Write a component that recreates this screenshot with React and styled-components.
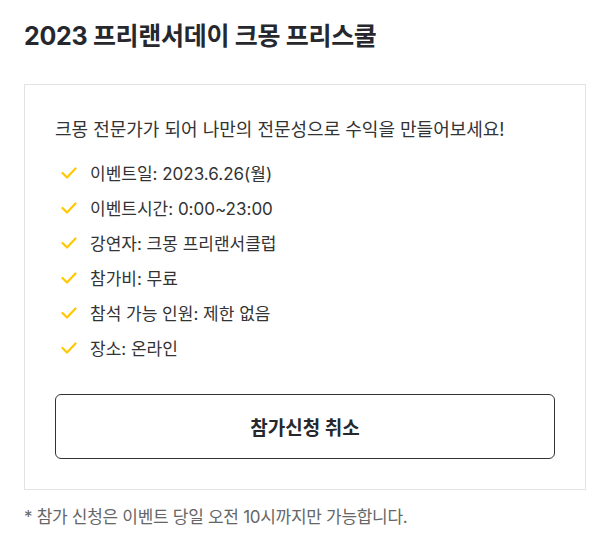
import React from "react";
import styled, { createGlobalStyle } from "styled-components";

const Global = createGlobalStyle`
  html, body { margin: 0; padding: 0; background: #fff; }
  body { font-family: Inter, "Noto Sans CJK KR", sans-serif; -webkit-font-smoothing: antialiased; }
`;

const Page = styled.div`
  width: 602px;
  padding: 19px 16px 0 24px;
  box-sizing: border-box;
`;

const Title = styled.h1`
  margin: 0;
  font-size: 25px;
  line-height: 34px;
  font-weight: 700;
  color: #26282d;
  letter-spacing: -0.3px;
`;

const Card = styled.section`
  margin-top: 31px;
  border: 1px solid #e3e3e3;
  padding: 33px 30px 30px 30px;
  display: flex;
  flex-direction: column;
`;

const Intro = styled.p`
  margin: 0 0 13px;
  font-size: 18px;
  line-height: 24px;
  color: #333;
`;

const List = styled.ul`
  list-style: none;
  margin: 0;
  padding: 0;
`;

const Item = styled.li`
  display: flex;
  align-items: center;
  height: 35px;
  font-size: 17px;
  color: #333;
  padding-left: 6px;
  gap: 13px;
`;

const Check = styled.svg`
  width: 16px;
  height: 12px;
  flex: none;
`;

const Button = styled.button`
  margin-top: 29px;
  height: 65px;
  width: 100%;
  border: 1px solid #333;
  border-radius: 6px;
  background: #fff;
  font-family: inherit;
  font-size: 19px;
  font-weight: 700;
  color: #26282d;
  cursor: pointer;
`;

const Note = styled.p`
  margin: 15px 0 0;
  font-size: 17px;
  line-height: 24px;
  letter-spacing: -0.3px;
  color: #666;
`;

const items = [
  "이벤트일: 2023.6.26(월)",
  "이벤트시간: 0:00~23:00",
  "강연자: 크몽 프리랜서클럽",
  "참가비: 무료",
  "참석 가능 인원: 제한 없음",
  "장소: 온라인",
];

export default function App() {
  return (
    <>
      <Global />
      <Page>
        <Title>2023 프리랜서데이 크몽 프리스쿨</Title>
        <Card>
          <Intro>크몽 전문가가 되어 나만의 전문성으로 수익을 만들어보세요!</Intro>
          <List>
            {items.map((t) => (
              <Item key={t}>
                <Check viewBox="0 0 16 12">
                  <polyline points="1.5,6 6,10.5 14.5,1.5" fill="none" stroke="#ffc800" strokeWidth="2.2" strokeLinecap="round" strokeLinejoin="round" />
                </Check>
                {t}
              </Item>
            ))}
          </List>
          <Button>참가신청 취소</Button>
        </Card>
        <Note>* 참가 신청은 이벤트 당일 오전 10시까지만 가능합니다.</Note>
      </Page>
    </>
  );
}
